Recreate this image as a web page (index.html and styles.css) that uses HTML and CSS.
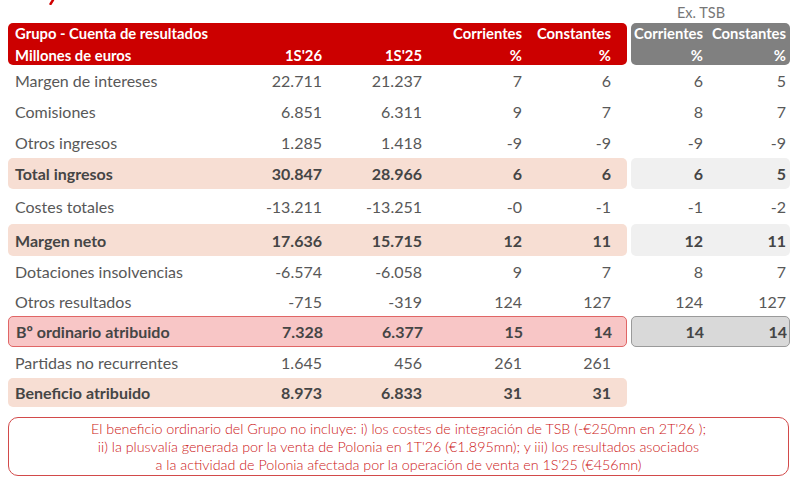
FILE: index.html
```html
<!DOCTYPE html>
<html lang="es">
<head>
<meta charset="utf-8">
<title>Grupo - Cuenta de resultados</title>
<link rel="stylesheet" href="styles.css">
</head>
<body>
<div class="page">
  <svg class="frag" width="10" height="5" viewBox="0 0 10 5"><path d="M7 0 L4.5 4" stroke="#d00000" stroke-width="2.4" stroke-linecap="round"/></svg>
  <div class="top">
    <div class="top-left"></div>
    <div class="top-right"><span class="ex">Ex. TSB</span></div>
  </div>

  <div class="row head">
    <div class="grp left red">
      <div class="cell lbl"><span>Grupo - Cuenta de resultados</span><span>Millones de euros</span></div>
      <div class="cell num"><span>&nbsp;</span><span>1S'26</span></div>
      <div class="cell num"><span>&nbsp;</span><span>1S'25</span></div>
      <div class="cell num"><span>Corrientes</span><span>%</span></div>
      <div class="cell num"><span>Constantes</span><span>%</span></div>
    </div>
    <div class="grp right gray">
      <div class="cell num"><span>Corrientes</span><span>%</span></div>
      <div class="cell num"><span>Constantes</span><span>%</span></div>
    </div>
  </div>

  <div class="row h31">
    <div class="grp left"><div class="cell lbl">Margen de intereses</div><div class="cell num">22.711</div><div class="cell num">21.237</div><div class="cell num">7</div><div class="cell num">6</div></div>
    <div class="grp right"><div class="cell num">6</div><div class="cell num">5</div></div>
  </div>
  <div class="row h31">
    <div class="grp left"><div class="cell lbl">Comisiones</div><div class="cell num">6.851</div><div class="cell num">6.311</div><div class="cell num">9</div><div class="cell num">7</div></div>
    <div class="grp right"><div class="cell num">8</div><div class="cell num">7</div></div>
  </div>
  <div class="row h31">
    <div class="grp left"><div class="cell lbl">Otros ingresos</div><div class="cell num">1.285</div><div class="cell num">1.418</div><div class="cell num">-9</div><div class="cell num">-9</div></div>
    <div class="grp right"><div class="cell num">-9</div><div class="cell num">-9</div></div>
  </div>
  <div class="row h31 bold">
    <div class="grp left peach"><div class="cell lbl">Total ingresos</div><div class="cell num">30.847</div><div class="cell num">28.966</div><div class="cell num">6</div><div class="cell num">6</div></div>
    <div class="grp right light"><div class="cell num">6</div><div class="cell num">5</div></div>
  </div>
  <div class="row h35">
    <div class="grp left"><div class="cell lbl">Costes totales</div><div class="cell num">-13.211</div><div class="cell num">-13.251</div><div class="cell num">-0</div><div class="cell num">-1</div></div>
    <div class="grp right"><div class="cell num">-1</div><div class="cell num">-2</div></div>
  </div>
  <div class="row h32 bold">
    <div class="grp left peach"><div class="cell lbl">Margen neto</div><div class="cell num">17.636</div><div class="cell num">15.715</div><div class="cell num">12</div><div class="cell num">11</div></div>
    <div class="grp right light"><div class="cell num">12</div><div class="cell num">11</div></div>
  </div>
  <div class="row h30">
    <div class="grp left"><div class="cell lbl">Dotaciones insolvencias</div><div class="cell num">-6.574</div><div class="cell num">-6.058</div><div class="cell num">9</div><div class="cell num">7</div></div>
    <div class="grp right"><div class="cell num">8</div><div class="cell num">7</div></div>
  </div>
  <div class="row h30">
    <div class="grp left"><div class="cell lbl">Otros resultados</div><div class="cell num">-715</div><div class="cell num">-319</div><div class="cell num">124</div><div class="cell num">127</div></div>
    <div class="grp right"><div class="cell num">124</div><div class="cell num">127</div></div>
  </div>
  <div class="row h31 bold">
    <div class="grp left pink"><div class="cell lbl">Bº ordinario atribuido</div><div class="cell num">7.328</div><div class="cell num">6.377</div><div class="cell num">15</div><div class="cell num">14</div></div>
    <div class="grp right mid"><div class="cell num">14</div><div class="cell num">14</div></div>
  </div>
  <div class="row h31">
    <div class="grp left"><div class="cell lbl">Partidas no recurrentes</div><div class="cell num">1.645</div><div class="cell num">456</div><div class="cell num">261</div><div class="cell num">261</div></div>
    <div class="grp right"></div>
  </div>
  <div class="row h29 bold">
    <div class="grp left peach"><div class="cell lbl">Beneficio atribuido</div><div class="cell num">8.973</div><div class="cell num">6.833</div><div class="cell num">31</div><div class="cell num">31</div></div>
    <div class="grp right"></div>
  </div>

  <div class="note">
    <p>El beneficio ordinario del Grupo no incluye: i) los costes de integración de TSB (-€250mn en 2T'26 );</p>
    <p>ii) la plusvalía generada por la venta de Polonia en 1T'26 (€1.895mn); y iii) los resultados asociados</p>
    <p>a la actividad de Polonia afectada por la operación de venta en 1S'25 (€456mn)</p>
  </div>
</div>
</body>
</html>
```

FILE: styles.css
```css
html, body {
  margin: 0;
  padding: 0;
  background: #ffffff;
}
body {
  font-family: "Lato", "Liberation Sans", sans-serif;
  color: #585858;
  width: 792px;
  height: 477px;
  overflow: hidden;
}
.page {
  position: relative;
  width: 792px;
}
.frag {
  position: absolute;
  left: 46px;
  top: 0;
}
.top {
  display: flex;
  gap: 4px;
  height: 23px;
  padding-left: 8px;
}
.top-left { width: 619px; }
.top-right {
  width: 159px;
  display: flex;
  justify-content: center;
  align-items: center;
  padding: 2px 19px 0 0;
  box-sizing: border-box;
}
.ex {
  font-size: 14.5px;
  color: #777777;
}
.row {
  display: flex;
  gap: 4px;
  padding-left: 8px;
  font-size: 16px;
}
.h29 { height: 29px; }
.h30 { height: 30px; }
.h31 { height: 31px; }
.h32 { height: 32px; }
.h35 { height: 35px; }

.grp {
  display: grid;
  align-items: center;
  box-sizing: border-box;
  border-radius: 5px;
}
.left {
  width: 619px;
  grid-template-columns: 207px 100px 100px 100px 89px;
  padding: 0 16px 0 7px;
}
.right {
  width: 159px;
  grid-template-columns: 72px 83px;
  padding: 0 4px 0 0;
}
.cell { white-space: nowrap; }
.num { text-align: right; }

.head { height: 42px; }
.head .grp {
  color: #ffffff;
  font-weight: 700;
  font-size: 14.8px;
}
.head .cell {
  display: flex;
  flex-direction: column;
  gap: 4px;
}
.head .num { align-items: flex-end; }
.red { background: #cc0000; }
.gray { background: #808080; }

.bold .cell {
  font-weight: 700;
  color: #454545;
}
.peach { background: #f7ded3; }
.light { background: #f0f0f0; }
.pink {
  background: #f8c6c6;
  border: 1px solid #e06666;
}
.mid {
  background: #d9d9d9;
  border: 1px solid #9a9a9a;
}

.note {
  margin: 10px 3px 0 8px;
  height: 59px;
  box-sizing: border-box;
  border: 1px solid #d24a4a;
  border-radius: 10px;
  color: #cc1414;
  font-size: 14.3px;
  font-weight: 300;
  text-align: center;
  display: flex;
  flex-direction: column;
  justify-content: center;
  gap: 1px;
}
.note p { margin: 0; line-height: 17px; }
```
